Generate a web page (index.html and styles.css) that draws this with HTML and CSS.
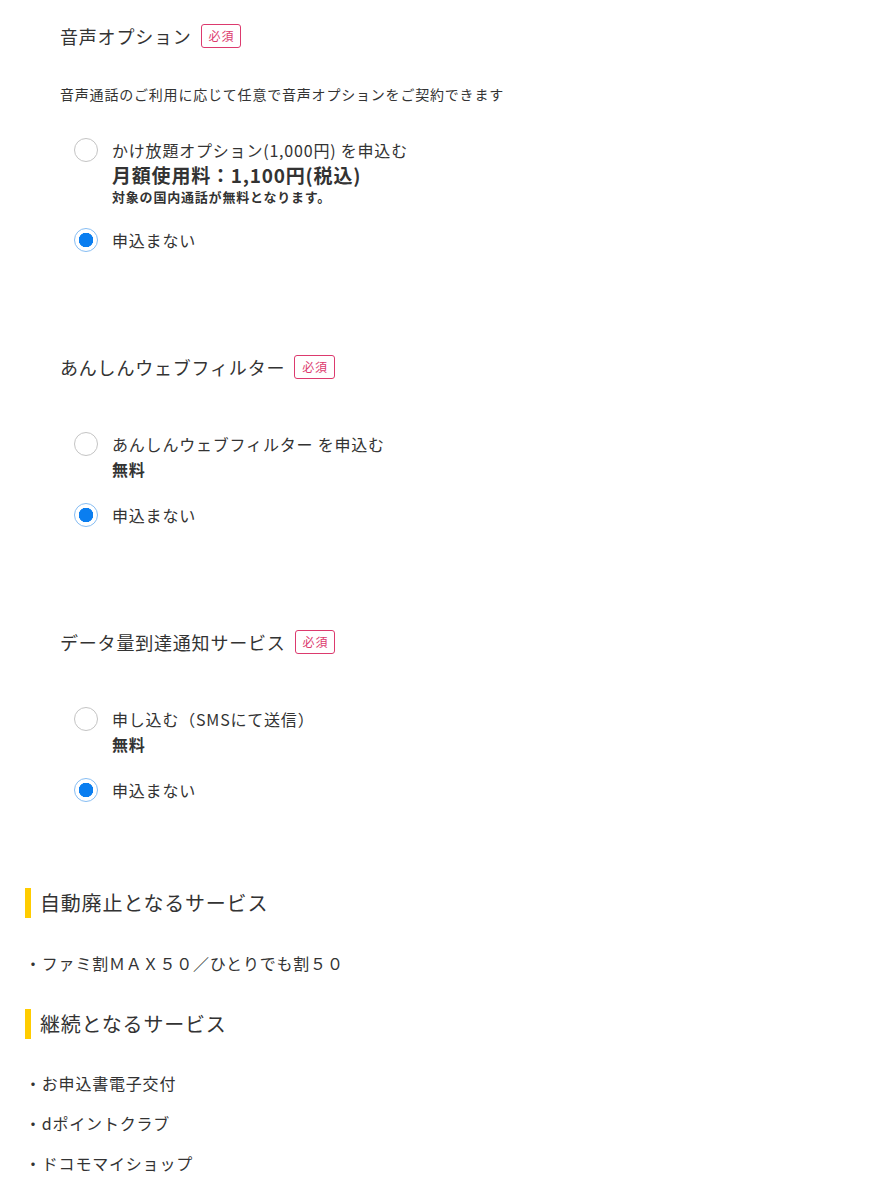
FILE: index.html
```html
<!doctype html>
<html lang="ja">
  <head>
    <meta charset="utf-8" />
    <title>オプション選択</title>
    <link rel="stylesheet" href="styles.css">
  </head>
  <body>
    <div id="options">
      <div class="option-group first">
        <h2 class="group-title">音声オプション<span class="required">必須</span></h2>
        <p class="group-desc">音声通話のご利用に応じて任意で音声オプションをご契約できます</p>
        <label class="choice">
          <input type="radio" name="voice">
          <span class="choice-body">
            <span class="choice-label">かけ放題オプション(1,000円) を申込む</span>
            <span class="price">月額使用料：1,100円(税込)</span>
            <span class="note">対象の国内通話が無料となります。</span>
          </span>
        </label>
        <label class="choice">
          <input type="radio" name="voice" checked>
          <span class="choice-body"><span class="choice-label">申込まない</span></span>
        </label>
      </div>

      <div class="option-group">
        <h2 class="group-title">あんしんウェブフィルター<span class="required">必須</span></h2>
        <label class="choice">
          <input type="radio" name="filter">
          <span class="choice-body">
            <span class="choice-label">あんしんウェブフィルター を申込む</span>
            <span class="free">無料</span>
          </span>
        </label>
        <label class="choice">
          <input type="radio" name="filter" checked>
          <span class="choice-body"><span class="choice-label">申込まない</span></span>
        </label>
      </div>

      <div class="option-group">
        <h2 class="group-title">データ量到達通知サービス<span class="required">必須</span></h2>
        <label class="choice">
          <input type="radio" name="data">
          <span class="choice-body">
            <span class="choice-label">申し込む（SMSにて送信）</span>
            <span class="free">無料</span>
          </span>
        </label>
        <label class="choice">
          <input type="radio" name="data" checked>
          <span class="choice-body"><span class="choice-label">申込まない</span></span>
        </label>
      </div>
    </div>

    <div id="services">
      <h3 class="bar-title">自動廃止となるサービス</h3>
      <ul class="service-list">
        <li>・ファミ割ＭＡＸ５０／ひとりでも割５０</li>
      </ul>
      <h3 class="bar-title">継続となるサービス</h3>
      <ul class="service-list">
        <li>・お申込書電子交付</li>
        <li>・dポイントクラブ</li>
        <li>・ドコモマイショップ</li>
      </ul>
    </div>
  </body>
</html>
```

FILE: styles.css
```css
* { margin: 0; padding: 0; box-sizing: border-box; }
body {
  margin: 0;
  background: #fff;
  color: #333;
  font-family: "Noto Sans CJK JP", "Noto Sans", sans-serif;
  letter-spacing: 0.05em;
  width: 886px;
}
#options { padding: 21px 0 0 60px; }
.option-group { margin-top: 99px; }
.option-group.first { margin-top: 0; }
.group-title {
  font-size: 18px;
  font-weight: normal;
  line-height: 30px;
  display: flex;
  align-items: center;
  margin-bottom: 49px;
}
.first .group-title { margin-bottom: 31px; }
.required {
  display: inline-block;
  margin-left: 9px;
  border: 1px solid #dc3a6e;
  border-radius: 3px;
  color: #dc3a6e;
  font-size: 12px;
  line-height: 22px;
  padding: 0 6px 0 7px;
}
.group-desc { font-size: 14px; line-height: 24px; margin-bottom: 31px; }
.choice { display: flex; align-items: flex-start; margin-bottom: 21px; cursor: pointer; }
.choice:last-child { margin-bottom: 0; }
.choice input {
  appearance: none;
  -webkit-appearance: none;
  width: 24px;
  height: 24px;
  margin: 1px 14px 0 14px;
  border: 1.5px solid #c4c4c4;
  border-radius: 50%;
  background: #fff;
  flex: none;
}
.choice input:checked {
  border: 1.5px solid #86bdf3;
  background: radial-gradient(circle, #0a7ef0 0 7px, #fff 7.5px);
}
.choice-body { display: flex; flex-direction: column; }
.choice-label { font-size: 16px; line-height: 26px; }
.price { font-size: 19px; font-weight: bold; line-height: 24px; }
.note { font-size: 13px; font-weight: bold; line-height: 19px; }
.free { font-size: 16px; font-weight: bold; line-height: 24px; }

#services { padding: 85px 0 0 25px; }
.bar-title {
  font-size: 20px;
  font-weight: normal;
  line-height: 30px;
  border-left: 6px solid #ffcc00;
  padding-left: 9px;
}
.service-list { list-style: none; margin: 33px 0 34px; }
.service-list:last-child { margin-top: 32px; }
.service-list li { font-size: 16px; line-height: 24px; margin-bottom: 16px; }
.service-list li:last-child { margin-bottom: 0; }
```
